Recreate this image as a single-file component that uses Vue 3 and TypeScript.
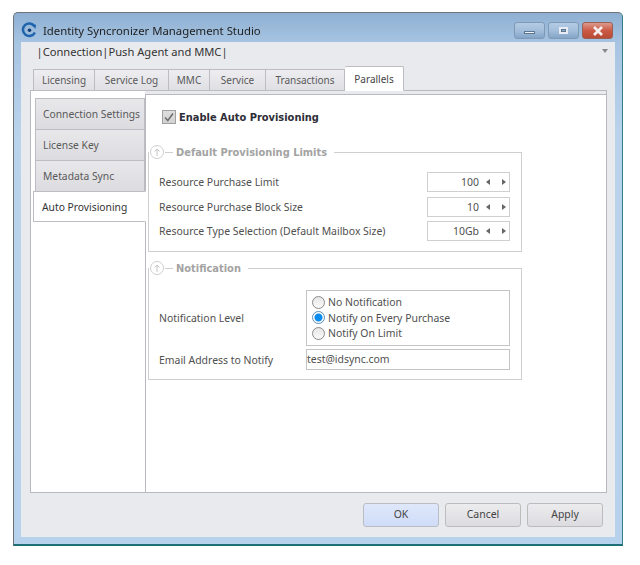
<template>
  <div class="page">
    <div class="window">
      <div class="titlebar">
        <svg class="logo" width="16" height="16" viewBox="0 0 16 16">
          <path d="M13.5 4.200A6.300 6.300 0 1 0 13.900 10.500" fill="none" stroke="#1f64ad" stroke-width="2.500" />
          <path d="M10.800 2.500L15.200 2.800L14.400 7z" fill="#1f64ad" />
          <circle cx="8.500" cy="8.200" r="1.800" fill="#123f78" />
        </svg>
        <span class="title">Identity Syncronizer Management Studio</span>
        <div class="win-buttons">
          <div class="win-btn"><span class="min-glyph"></span></div>
          <div class="win-btn"><span class="max-glyph"></span></div>
          <div class="win-btn close">
            <svg width="14" height="10" viewBox="0 0 14 10">
              <path d="M3 1l8 8M11 1l-8 8" stroke="#f4efee" stroke-width="2.600" />
            </svg>
          </div>
        </div>
      </div>

      <div class="client">
        <div class="crumb-row">
          <span class="crumb">|Connection|Push Agent and MMC|</span>
          <span class="crumb-arrow"></span>
        </div>

        <div class="tabs">
          <div
            v-for="tab in topTabs"
            :key="tab.name"
            class="tab"
            :class="{ active: tab.name === 'Parallels' }"
            :style="{ width: tab.width + 'px' }"
          >
            {{ tab.name }}
          </div>
        </div>

        <div class="panel">
          <div class="rail">
            <div
              v-for="item in sideTabs"
              :key="item"
              class="side-tab"
              :class="{ active: item === 'Auto Provisioning' }"
            >
              {{ item }}
            </div>
          </div>

          <div class="content">
            <div class="enable-row">
              <span class="checkbox">
                <svg width="12" height="12" viewBox="0 0 12 12">
                  <path d="M2 6.500l2.800 3L10 2.500" fill="none" stroke="#6f6f6f" stroke-width="1.600" />
                </svg>
              </span>
              <span class="enable-label">Enable Auto Provisioning</span>
            </div>

            <div class="group limits">
              <div class="legend">
                <svg width="16" height="16" viewBox="0 0 16 16">
                  <circle cx="8" cy="8" r="6.500" fill="#fff" stroke="#cfcfcf" />
                  <path d="M8 12V5M5.500 7.500L8 5l2.500 2.500" fill="none" stroke="#c4c4c4" />
                </svg>
                <span class="dash"></span>
                <span class="legend-text">Default Provisioning Limits</span>
              </div>
              <div v-for="row in limits" :key="row.label" class="limit-row">
                <span>{{ row.label }}</span>
                <div class="spinner">
                  <span class="spin-value">{{ row.value }}</span>
                  <span class="arrow left"></span>
                  <span class="arrow right"></span>
                </div>
              </div>
            </div>

            <div class="group notify">
              <div class="legend">
                <svg width="16" height="16" viewBox="0 0 16 16">
                  <circle cx="8" cy="8" r="6.500" fill="#fff" stroke="#cfcfcf" />
                  <path d="M8 12V5M5.500 7.500L8 5l2.500 2.500" fill="none" stroke="#c4c4c4" />
                </svg>
                <span class="dash"></span>
                <span class="legend-text">Notification</span>
              </div>
              <div class="notify-row">
                <span>Notification Level</span>
                <div class="radio-box">
                  <div v-for="opt in levels" :key="opt" class="radio-row">
                    <span class="radio" :class="{ on: opt === selected }"></span>
                    <span>{{ opt }}</span>
                  </div>
                </div>
              </div>
              <div class="email-row">
                <span>Email Address to Notify</span>
                <div class="email-box">test@idsync.com</div>
              </div>
            </div>
          </div>
        </div>

        <div class="footer">
          <button class="btn primary">OK</button>
          <button class="btn">Cancel</button>
          <button class="btn">Apply</button>
        </div>
      </div>
    </div>
  </div>
</template>

<script setup lang="ts">
const topTabs = [
  { name: 'Licensing', width: 62 },
  { name: 'Service Log', width: 74 },
  { name: 'MMC', width: 41 },
  { name: 'Service', width: 56 },
  { name: 'Transactions', width: 79 },
  { name: 'Parallels', width: 59 },
]

const sideTabs = ['Connection Settings', 'License Key', 'Metadata Sync', 'Auto Provisioning']

const limits = [
  { label: 'Resource Purchase Limit', value: '100' },
  { label: 'Resource Purchase Block Size', value: '10' },
  { label: 'Resource Type Selection (Default Mailbox Size)', value: '10Gb' },
]

const levels = ['No Notification', 'Notify on Every Purchase', 'Notify On Limit']
const selected = 'Notify on Every Purchase'
</script>

<style>
html,
body {
  background: #fff;
}
</style>

<style scoped>
.page {
  width: 640px;
  height: 565px;
  padding: 12px 0 0 13px;
  box-sizing: border-box;
  font-family: "Noto Sans", sans-serif;
  font-size: 10.45px;
  color: #505050;
  overflow: hidden;
}

.window {
  width: 610px;
  height: 534px;
  box-sizing: border-box;
  display: flex;
  flex-direction: column;
  padding: 0 7px 7px 7px;
  border: 1px solid #6f7478;
  border-bottom: 2px solid #1f6f78;
  border-right-color: #2f7f8a;
  border-radius: 5px 5px 0 0;
  background: linear-gradient(#8fb0d3, #a7c4e2 30px, #b9d3ec 120px, #b7d2ec);
  filter: blur(0.5px);
}

.titlebar {
  height: 29px;
  flex: none;
  display: flex;
  align-items: center;
}

.logo {
  margin-top: 5px;
}

.title {
  margin: 6px 0 0 6px;
  font-size: 11.35px;
  color: #222;
}

.win-buttons {
  margin-left: auto;
  margin-right: 2px;
  margin-top: 6px;
  display: flex;
  gap: 3px;
}

.win-btn {
  width: 31px;
  height: 17px;
  box-sizing: border-box;
  border: 1px solid #7f9ab6;
  border-radius: 3px;
  background: linear-gradient(#b4cbe3, #a3bedb 50%, #84a5c8);
  display: flex;
  align-items: center;
  justify-content: center;
}

.min-glyph {
  width: 9px;
  height: 1px;
  margin-top: 4px;
  background: #eef3f8;
  border: 1px solid #5d7690;
}

.max-glyph {
  width: 9px;
  height: 7px;
  border: 2px solid #e6ecf3;
  outline: 1px solid #5d7690;
  outline-offset: -3px;
  background: #8fa9c5;
  box-sizing: border-box;
}

.win-btn.close {
  border-color: #9a6055;
  background: linear-gradient(#dc9a8c, #cc5a45 50%, #b84a34);
}

.client {
  flex: 1;
  min-height: 0;
  background: #e9eaee;
  display: flex;
  flex-direction: column;
}

.crumb-row {
  height: 25px;
  flex: none;
  display: flex;
  align-items: center;
  justify-content: space-between;
  padding: 0 7px 7px 15.5px;
  box-sizing: border-box;
  font-size: 11.15px;
  color: #333;
}

.crumb-arrow {
  width: 0;
  height: 0;
  border: 3px solid transparent;
  border-top: 4px solid #888;
  border-bottom: 0;
}

.tabs {
  display: flex;
  height: 23px;
  flex: none;
  padding-left: 12px;
  align-items: flex-end;
  position: relative;
  z-index: 1;
  font-size: 10px;
}

.tab {
  height: 22px;
  box-sizing: border-box;
  margin-bottom: -1px;
  display: flex;
  align-items: center;
  justify-content: center;
  border: 1px solid #bcbcc2;
  border-left-width: 0;
  background: linear-gradient(#eeeef1, #dfdfe4);
  color: #5a5a5a;
}

.tab:first-child {
  border-left-width: 1px;
}

.tab.active {
  height: 25px;
  background: #fff;
  border-left-width: 0;
  border-bottom-color: #fff;
  border-radius: 2px 2px 0 0;
  color: #444;
}

.panel {
  margin-left: 9px;
  width: 577px;
  height: 403px;
  flex: none;
  box-sizing: border-box;
  border: 1px solid #b8b8be;
  background: #fff;
  display: flex;
}

.rail {
  width: 114px;
  flex: none;
  padding-top: 7px;
  display: flex;
  flex-direction: column;
  position: relative;
  z-index: 1;
}

.side-tab {
  height: 31px;
  width: 110px;
  margin-left: 4px;
  box-sizing: border-box;
  padding-left: 7px;
  display: flex;
  align-items: center;
  font-size: 10.3px;
  background: linear-gradient(#e8e8eb, #dcdce0);
  border: 1px solid #bcbcc2;
  border-bottom-width: 0;
  color: #5a5a5a;
  white-space: nowrap;
}

.side-tab.active {
  width: 113px;
  margin-left: 2px;
  padding-left: 8px;
  background: #fff;
  border-bottom-width: 1px;
  border-right-color: #fff;
  color: #333;
}

.content {
  flex: 1;
  position: relative;
  margin-top: 3px;
  border-top: 1px solid #b8b8be;
  border-left: 1px solid #b8b8be;
  box-shadow: 0 -3px 0 #e9eaee;
  background: #fff;
}

.enable-row {
  display: flex;
  align-items: center;
  height: 16px;
  margin: 14px 0 0 16px;
}

.checkbox {
  width: 14px;
  height: 14px;
  box-sizing: border-box;
  border: 1px solid #a0a0a0;
  background: linear-gradient(#dedede, #d2d2d2);
  display: flex;
  align-items: center;
  justify-content: center;
}

.enable-label {
  margin-left: 3px;
  font-family: "DejaVu Sans", sans-serif;
  font-weight: 700;
  font-size: 9.9px;
  color: #2e2e38;
}

.group {
  position: relative;
  box-sizing: border-box;
  border: 1px solid #cfcfcf;
  margin-left: 2px;
  width: 374px;
}

.limits {
  margin-top: 27px;
  height: 100px;
  padding: 19px 11px 0 10px;
}

.notify {
  margin-top: 16px;
  height: 112px;
  padding: 21px 11px 0 10px;
}

.legend {
  position: absolute;
  top: -9px;
  left: 0;
  padding-right: 7px;
  display: flex;
  align-items: center;
  background: #fff;
  height: 16px;
}

.dash {
  width: 8px;
  height: 1px;
  background: #cfcfcf;
  margin-right: 3px;
}

.legend-text {
  font-family: "DejaVu Sans", sans-serif;
  font-weight: 700;
  font-size: 9.9px;
  color: #a3a3a3;
}

.limit-row {
  display: flex;
  align-items: center;
  justify-content: space-between;
  height: 20px;
  margin-bottom: 4.5px;
}

.spinner {
  width: 83px;
  height: 20px;
  box-sizing: border-box;
  border: 1px solid #cfcfcf;
  display: flex;
  align-items: center;
  padding-left: 4px;
}

.spin-value {
  width: 47px;
  text-align: right;
}

.arrow {
  width: 0;
  height: 0;
  border-top: 3px solid transparent;
  border-bottom: 3px solid transparent;
}

.arrow.left {
  margin-left: 7px;
  border-right: 4px solid #666;
}

.arrow.right {
  margin-left: 12px;
  border-left: 4px solid #666;
}

.notify-row {
  display: flex;
  align-items: center;
}

.notify-row > span:first-child,
.email-row > span:first-child {
  width: 147px;
  flex: none;
}

.radio-box {
  width: 204px;
  height: 56px;
  box-sizing: border-box;
  border: 1px solid #c4c4c4;
  padding: 3.5px 0 0 5px;
}

.radio-row {
  display: flex;
  align-items: center;
  height: 15.5px;
  gap: 3px;
}

.radio {
  width: 13px;
  height: 13px;
  box-sizing: border-box;
  border-radius: 50%;
  border: 1px solid #8a8a8a;
  background: linear-gradient(#e6e6e6, #fafafa);
}

.radio.on {
  border-color: #5c8fb8;
  background: radial-gradient(circle, #0a8cf0 0 3.5px, #fff 4.5px);
}

.email-row {
  display: flex;
  align-items: center;
  margin-top: 3px;
}

.email-box {
  width: 204px;
  height: 21px;
  box-sizing: border-box;
  border: 1px solid #c4c4c4;
  line-height: 19px;
}

.footer {
  display: flex;
  gap: 6px;
  justify-content: flex-end;
  padding: 10px 12px 0 0;
}

.btn {
  width: 76px;
  height: 24px;
  font: inherit;
  color: #444;
  border: 1px solid #bcbcbc;
  border-radius: 3px;
  background: linear-gradient(#ececef, #dcdce0);
  padding: 0 0 2px;
}

.btn.primary {
  border-color: #b9bdc6;
  background: linear-gradient(#dfe8fb, #cfdcf8);
}
</style>
